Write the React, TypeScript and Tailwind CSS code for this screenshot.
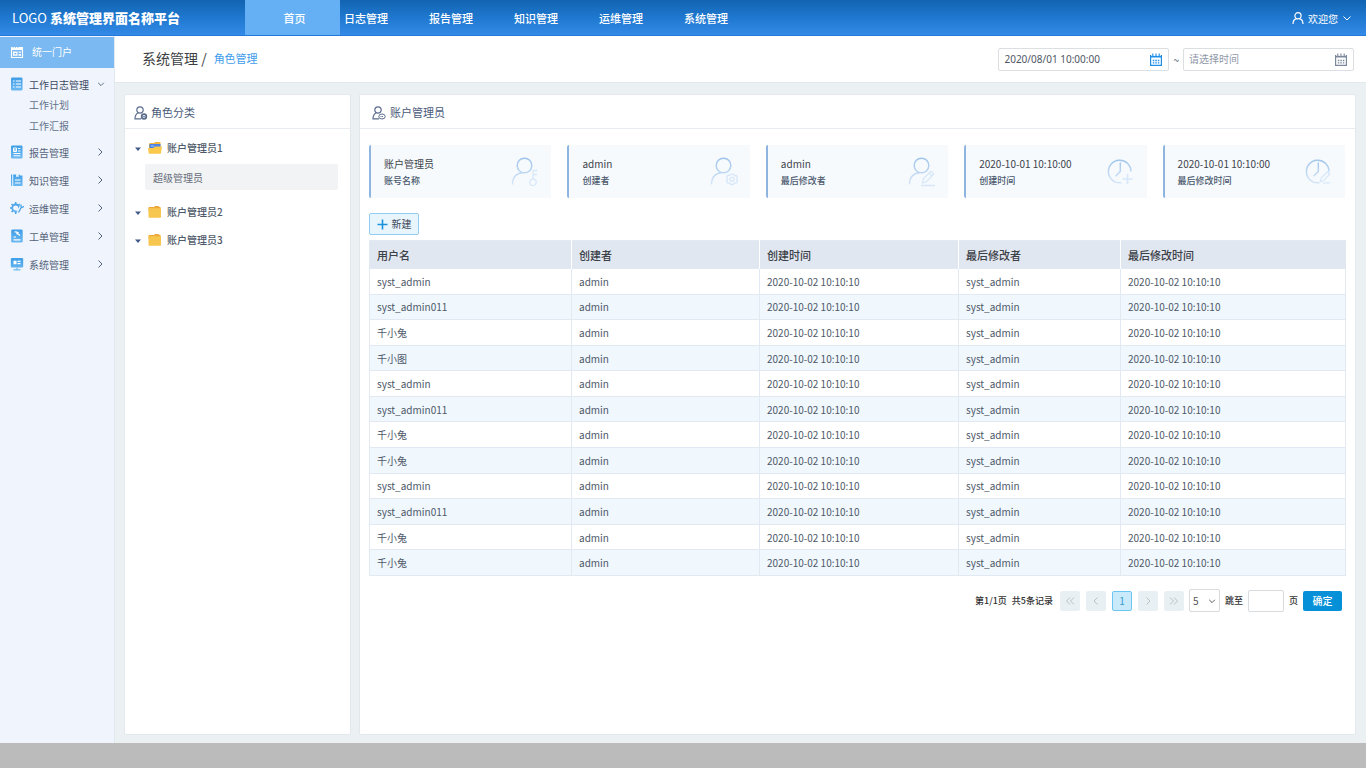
import React from "react";

const accounts = ["syst_admin", "syst_admin011", "千小兔", "千小图", "syst_admin", "syst_admin011", "千小兔", "千小兔", "syst_admin", "syst_admin011", "千小兔", "千小兔"];

function Chevron({ dir, className }: { dir: "left" | "right" | "down"; className?: string }) {
  const d = { left: "M6.5 1.5 3 5l3.5 3.5", right: "M3.5 1.5 7 5 3.5 8.5", down: "M1.5 3.5 5 7l3.5-3.5" }[dir];
  return (
    <svg viewBox="0 0 10 10" className={className ?? "size-2.5"} fill="none" stroke="currentColor" aria-hidden="true">
      <path d={d} />
    </svg>
  );
}

function DoubleChevron({ dir }: { dir: "left" | "right" }) {
  return (
    <svg viewBox="0 0 10 10" className="size-2.5" fill="none" stroke="currentColor" aria-hidden="true">
      <path d={dir === "left" ? "M5 1.5 1.5 5 5 8.5M9 1.5 5.5 5 9 8.5" : "M1 1.5 4.500 5 1 8.500M5 1.500 8.500 5 5 8.500"} />
    </svg>
  );
}

function PortalIcon() {
  return (
    <svg viewBox="0 0 14 14" className="size-3.5" fill="none" aria-hidden="true">
      <path d="M1 5V2h12v3z" fill="#fff" />
      <path d="M3 1v2M5.500 1v2M8 1v2" stroke="#7ab9f1" strokeWidth=".7" />
      <path d="M1.500 5v7.500h11V5" stroke="#fff" strokeWidth="1.200" />
      <path d="M3 6.500h4.500v4.200H3zM8.500 6.500H11v1.200H8.500zM8.500 9H11v1.700H8.500z" fill="#fff" />
      <path d="M4.300 8h2v1.400h-2z" fill="#7ab9f1" />
    </svg>
  );
}

type MenuIconName = "log" | "report" | "knowledge" | "ops" | "ticket" | "system";

function MenuIcon({ name }: { name: MenuIconName }) {
  const id = "menu-" + name;
  const blue = "url(#" + id + ")";
  const body: Record<MenuIconName, React.ReactNode> = {
    log: (
      <>
        <rect x="1" y=".5" width="11.500" height="13" rx="1.200" fill={blue} />
        <path d="M3 4h1.500M5.800 4H11M3 7h1.500M5.800 7H11M3 10h1.500M5.800 10H11" stroke="#fff" strokeWidth="1.200" />
      </>
    ),
    report: (
      <>
        <rect x="1" y=".5" width="11.500" height="13" rx="1.200" fill={blue} />
        <path d="M3.500 3h3v3.500h-3zM8 3.500h2.500M8 6h2.500M3.500 8.500h7M3.500 10.800h7" stroke="#fff" />
        <path d="M4 5h2" stroke="#fff" />
      </>
    ),
    knowledge: (
      <>
        <path d="M1 1.500h1.200V13H1z" fill={blue} />
        <path d="M3.200 1.500h3v2.800l1.200-.8 1.200.8V1.500h.9l.5 1h2.500V13H3.200z" fill={blue} />
        <path d="M5 7h5.500M5 10h5.500" stroke="#fff" strokeWidth="1.100" />
      </>
    ),
    ops: (
      <>
        <circle cx="5.700" cy="7" r="3.500" stroke={blue} strokeWidth="1.800" />
        <path d="M5.700 1v2M5.700 11v2M0 7h2M1.600 3l1.500 1.500M1.600 11l1.500-1.500M9.800 3 8.400 4.400M9.700 11 8.300 9.600" stroke="#4ba6ea" strokeWidth="1.600" />
        <path d="m8 11 4.500-6.500" stroke="#eff5fd" strokeWidth="3.500" />
        <path d="m8.500 11.500 3-5.500M11 3.500v2.200l1.300.8 1.500-1.200" stroke="#4ba6ea" strokeWidth="1.300" />
      </>
    ),
    ticket: (
      <>
        <rect x="1.200" y=".5" width="11.500" height="13" rx="1.200" fill={blue} />
        <path d="M4.500 3c2-.5 3 .3 3 1.500L10 6.500M6.500 5 8.500 3M3.500 8h2.500M3.500 10.800h7" stroke="#fff" strokeWidth="1.200" />
      </>
    ),
    system: (
      <>
        <rect x=".8" y="1" width="12.400" height="9.500" rx="1" fill={blue} />
        <path d="M3.500 3.800h3v3.500h-3zM7.500 3.800h3v1.300h-3zM7.500 6h3v1.300h-3z" fill="#fff" />
        <path d="M7 10.500v2.200M3.500 12.800h7" stroke="#6eb9f0" strokeWidth="1.200" />
      </>
    ),
  };
  return (
    <svg viewBox="0 0 14 14" className="size-3.5 shrink-0" fill="none" aria-hidden="true">
      <defs>
        <linearGradient id={id} x1="0" y1="0" x2="0" y2="14" gradientUnits="userSpaceOnUse">
          <stop stopColor="#3d9de6" />
          <stop offset="1" stopColor="#6ebaf2" />
        </linearGradient>
      </defs>
      {body[name]}
    </svg>
  );
}

function PanelUserIcon({ kind }: { kind: "gear" | "dots" }) {
  return (
    <svg viewBox="0 0 14 14" className="size-3.5" fill="none" stroke="#5b6d8c" aria-hidden="true">
      <circle cx="6" cy="4" r="3.200" strokeWidth="1.200" />
      <path d="M4 7C2 8 1 10 1 12.800h6" strokeWidth="1.200" />
      {kind === "gear" ? (
        <>
          <circle cx="10" cy="10.500" r="2.300" strokeWidth="1.800" />
          <circle cx="10" cy="10.500" r=".5" />
        </>
      ) : (
        <>
          <ellipse cx="10" cy="10.500" rx="3.200" ry="2.500" />
          <path d="M8.500 10.500h3" strokeDasharray="1 .5" />
        </>
      )}
    </svg>
  );
}

function CalendarIcon() {
  return (
    <svg viewBox="0 0 12 13" className="h-[13px] w-3" fill="none" stroke="currentColor" aria-hidden="true">
      <path d="M.6 2v10.400h10.800V2" strokeWidth="1.200" />
      <path d="M0 3.700h12" strokeWidth="1.600" />
      <path d="M2.800.5v3M6 .5v3M9.200.5v3" strokeWidth="1.100" />
      <path d="M2.800 7.500h6.500M2.800 9.800h6.500" strokeWidth="1.300" strokeDasharray="1.500 1" />
    </svg>
  );
}

function Folder({ open }: { open?: boolean }) {
  return (
    <svg viewBox="0 0 14 12" className="mt-0.5 h-3 w-3.5" aria-hidden="true">
      {open ? (
        <>
          <path d="M1 2.500Q1 1 2 1h4l1-1h5.500v9H1z" fill="#f3b63c" />
          <path d="M1.500 2h11v6h-11z" fill="#4c84e6" />
          <path d="M3 4h3" stroke="#a6c5fa" />
          <path d="M0 6h5.500l1.200-1.500H14L13 11q0 .8-.8.8H1.500Q.8 11.800.7 11z" fill="#fac94c" />
        </>
      ) : (
        <>
          <path d="M.5 1.700Q.5 1 1.200 1H6l1-1h3.500l1 1h1v4H.5z" fill="#eda83b" />
          <path d="M.5 2.300h12.500V11q0 .7-.7.7H1.200q-.7 0-.7-.7z" fill="#f7c64e" />
        </>
      )}
    </svg>
  );
}

type BadgeName = "key" | "gear" | "pen" | "clockPlus" | "clockPen";

function CardIcon({ name }: { name: BadgeName }) {
  const clock = name === "clockPlus" || name === "clockPen";
  const id = "fade-" + name;
  return (
    <svg viewBox="0 0 28 30" className="h-[30px] w-7 shrink-0" fill="none" aria-hidden="true">
      <defs>
        <linearGradient id={id} x1="0" y1="0" x2="0" y2="30" gradientUnits="userSpaceOnUse">
          <stop stopColor="#9cc2ea" />
          <stop offset="1" stopColor="#dceafa" />
        </linearGradient>
      </defs>
      <g stroke={"url(#" + id + ")"} strokeWidth="1.500">
        {clock ? (
          <>
            <path d="M24 14.500a11.300 11.300 0 1 0-9.500 11.200" />
            <path d="M13.300 6v8.500L9 18.800" strokeLinecap="round" />
          </>
        ) : (
          <>
            <circle cx="13.500" cy="8.500" r="7.300" />
            <path d="M1.500 27.500C1.500 20 6 15.800 11.500 15.700" />
          </>
        )}
      </g>
      <g stroke="#d8e8f9" strokeWidth="1.300">
        {name === "key" && <path d="M22 22v-9M22 13.500h4.500M22 17.500h4M22 22a3.300 3.300 0 1 0 .01 0" />}
        {name === "gear" && (
          <>
            <path d="m18 17.800 1.500.7 1.500-1.300h2.500l1 1.500 2-.2 1 2-1 1.800 1 2-1.200 1.800-2-.2-1 1.600h-2.500L19.700 26l-2 .1-1.200-2 1.200-1.800-1.200-2z" />
            <circle cx="22" cy="22.300" r="2" />
          </>
        )}
        {name === "pen" && <path d="m14.500 26 1-4.500 7.500-7.300 2.800 2.800-7 7.400zM21 16l3 3M13 28.500h14" />}
        {name === "clockPlus" && <path d="M20.500 17v10M15.500 22h10" strokeWidth="1.700" />}
        {name === "clockPen" && <path d="m15.500 24.500.7-3.500 6.300-6.300 2.300 2.300-6 6.500zM18 25.800h7" />}
      </g>
    </svg>
  );
}

const cards: { title: string; label: string; icon: BadgeName }[] = [
  { title: "账户管理员", label: "账号名称", icon: "key" },
  { title: "admin", label: "创建者", icon: "gear" },
  { title: "admin", label: "最后修改者", icon: "pen" },
  { title: "2020-10-01 10:10:00", label: "创建时间", icon: "clockPlus" },
  { title: "2020-10-01 10:10:00", label: "最后修改时间", icon: "clockPen" },
];

const menu: { name: string; icon: MenuIconName }[] = [
  { name: "报告管理", icon: "report" },
  { name: "知识管理", icon: "knowledge" },
  { name: "运维管理", icon: "ops" },
  { name: "工单管理", icon: "ticket" },
  { name: "系统管理", icon: "system" },
];

function DateField({ label, value, active }: { label: string; value?: string; active?: boolean }) {
  return (
    <div className="flex h-[23px] w-[171px] items-center rounded-xs border border-[#dcdfe2] bg-white pr-1.5 pl-[5px]">
      <input aria-label={label} defaultValue={value} placeholder="请选择时间" className="min-w-0 flex-1 font-['Noto_Sans','Noto_Sans_CJK_SC',sans-serif] text-[10px] text-[#4f5663] outline-none placeholder:text-[#8f98a8]" />
      <button type="button" aria-label={label} className={active ? "text-[#1e8ee8]" : "text-[#7c899c]"}>
        <CalendarIcon />
      </button>
    </div>
  );
}

function TreeRow({ name, open }: { name: string; open?: boolean }) {
  return (
    <button type="button" className="flex h-7 w-full items-center pl-2.5 text-[10px] font-medium text-[#4e5969]">
      <svg viewBox="0 0 6 4" className="mt-1 mr-[7px] h-1 w-1.5" aria-hidden="true"><path d="M0 .5h6L3 4z" fill="#41598b" /></svg>
      <Folder open={open} />
      <span className="ml-[5px]">{name}</span>
    </button>
  );
}

function PageButton({ label, children }: { label: string; children: React.ReactNode }) {
  return <button type="button" aria-label={label} className="flex size-5 items-center justify-center rounded-xs bg-[#e9f0f3] text-[#b5c1c8]">{children}</button>;
}

export default function App() {
  return (
    <div className="flex min-h-screen flex-col bg-[#ebf0f3] font-['Noto_Sans_CJK_SC',sans-serif] text-[10px] text-[#4e5969]">
      <header className="flex h-9 items-start border-b border-[#2279da] bg-linear-to-b from-[#1264b1] via-[#1f78cf] to-[#338ae7] text-white">
        <div className="flex h-9 w-[245px] items-center gap-[3px] pl-3 text-[13px]">
          <span>LOGO</span>
          <span className="font-black">系统管理界面名称平台</span>
        </div>
        <nav className="flex h-[35px] flex-1 text-[11px] font-medium">
          <a href="#home" className="flex w-[95px] items-center justify-center bg-[#65b0f5] pt-0.5 pl-1">首页</a>
          {["日志管理", "报告管理", "知识管理", "运维管理", "系统管理"].map((n) => (
            <a key={n} href={"#" + n} className="flex w-[85px] items-center pt-0.5 pl-1">{n}</a>
          ))}
        </nav>
        <button type="button" className="mr-3.5 flex h-9 items-center gap-1">
          <svg viewBox="0 0 12 12" className="size-3" fill="none" stroke="currentColor" strokeWidth="1.200" aria-hidden="true">
            <circle cx="6" cy="3.800" r="3.100" />
            <path d="M1 12c0-3 1.500-5 3.800-5.400M11 12c0-3-1.500-5-3.800-5.400" />
          </svg>
          <span>欢迎您</span>
          <Chevron dir="down" className="size-2.5" />
        </button>
      </header>

      <div className="flex flex-1">
        <aside className="w-[115px] shrink-0 border-r border-[#e0e8f0] bg-[#f0f5fd] pt-px">
          <a href="#portal" className="flex h-[31px] items-center gap-2 bg-[#7ab9f1] pb-0.5 pl-2.5 text-white"><PortalIcon />统一门户</a>
          <button type="button" className="mt-1.5 flex h-5 w-full items-center pr-[9px] pl-2.5 text-[#3c4a63]">
            <MenuIcon name="log" />
            <span className="ml-[5px] flex-1 text-left">工作日志管理</span>
            <Chevron dir="down" className="size-2" />
          </button>
          <a href="#plan" className="flex h-[21px] items-center pl-[29px] text-[#63728a]">工作计划</a>
          <a href="#summary" className="flex h-[21px] items-center pl-[29px] text-[#63728a]">工作汇报</a>
          <div className="mt-0.5">
            {menu.map((m) => (
              <button type="button" key={m.name} className="flex h-7 w-full items-center pr-[9px] pl-2.5 text-[#55637a]">
                <MenuIcon name={m.icon} />
                <span className="ml-[5px] flex-1 text-left">{m.name}</span>
                <Chevron dir="right" />
              </button>
            ))}
          </div>
        </aside>

        <div className="flex min-w-0 flex-1 flex-col">
          <div className="flex h-[47px] items-center justify-between border-b border-[#e2e8ec] bg-white pr-3 pl-[27px]">
            <div className="flex items-center pb-0.5">
              <h1 className="text-[14px] text-[#3d3f44]">系统管理 /</h1>
              <a href="#roles" className="ml-[7px] text-[11px] text-[#419cec]">角色管理</a>
            </div>
            <div className="flex items-center gap-1">
              <DateField label="开始时间" value="2020/08/01 10:00:00" active />
              <span>~</span>
              <DateField label="结束时间" />
            </div>
          </div>

          <div className="flex flex-1 gap-2 pt-[11px] pr-2.5 pb-2 pl-[9px]">
            <section className="w-[227px] shrink-0 rounded-xs border border-[#e2e8ec] bg-white">
              <h2 className="flex h-[34px] items-center gap-[3px] border-b border-[#e8ecf0] pt-0.5 pl-[9px] text-[11px] text-[#4a5b7a]"><PanelUserIcon kind="gear" />角色分类</h2>
              <div className="pt-1">
                <TreeRow name="账户管理员1" open />
                <button type="button" className="mx-5 mt-[3px] mb-[7px] flex h-[26px] w-[193px] items-center rounded-xs bg-[#f2f3f5] pl-2 text-[#666d7a]">超级管理员</button>
                <TreeRow name="账户管理员2" />
                <TreeRow name="账户管理员3" />
              </div>
            </section>

            <main className="min-w-0 flex-1 rounded-xs border border-[#e2e8ec] bg-white">
              <h2 className="flex h-[34px] items-center gap-1 border-b border-[#e8ecf0] pt-0.5 pl-3 text-[11px] text-[#4a5b7a]"><PanelUserIcon kind="dots" />账户管理员</h2>
              <div className="pt-4 pr-2.5 pl-[9px]">
                <div className="grid grid-cols-5 gap-4">
                  {cards.map((c) => (
                    <div key={c.label} className="flex h-[53px] items-center justify-between rounded-l-xs border-l-2 border-[#8db5e0] bg-[#f6fafd] pr-3 pl-[13px]">
                      <div>
                        <div className="leading-[17px] text-[#3f444c]">{c.title}</div>
                        <div className="text-[9px] leading-[17px] font-medium text-[#4a586c]">{c.label}</div>
                      </div>
                      <CardIcon name={c.icon} />
                    </div>
                  ))}
                </div>

                <button type="button" className="mt-[15px] flex h-[22px] w-[50px] items-center justify-center gap-1 rounded-xs border border-[#91cef4] bg-[#e8f5fd] pb-0.5 text-[#3c4656]">
                  <svg viewBox="0 0 11 11" className="mt-0.5 size-[11px]" stroke="#1a93dc" strokeWidth="1.600" aria-hidden="true"><path d="M5.500.5v10M.5 5.500h10" /></svg>
                  新建
                </button>

                <table className="mt-[5px] h-[336px] w-full table-fixed border-collapse border border-[#e2e9f2] text-left">
                  <colgroup>
                    <col className="w-[202px]" />
                    <col className="w-[188px]" />
                    <col className="w-[199px]" />
                    <col className="w-[162px]" />
                    <col className="w-[225px]" />
                  </colgroup>
                  <thead>
                    <tr className="h-7 bg-[#e1e7f0] text-[11px] text-[#3c4047]">
                      {["用户名", "创建者", "创建时间", "最后修改者", "最后修改时间"].map((h) => (
                        <th key={h} scope="col" className="border-r border-white px-[7px] py-0 pt-0.5 font-medium last:border-[#e1e7f0]">{h}</th>
                      ))}
                    </tr>
                  </thead>
                  <tbody>
                    {accounts.map((a, i) => (
                      <tr key={i} className="h-[25px] odd:bg-white even:bg-[#f0f7fd]">
                        {[a, "admin", "2020-10-02 10:10:10", "syst_admin", "2020-10-02 10:10:10"].map((v, j) => (
                          <td key={j} className="border border-[#e2e9f2] px-[7px] py-0">{v}</td>
                        ))}
                      </tr>
                    ))}
                  </tbody>
                </table>

                <div className="mt-[13px] mr-[3px] flex items-center justify-end gap-[5px] text-[9px] font-medium text-[#333]">
                  <span>第1/1页</span>
                  <span className="mr-0.5">共5条记录</span>
                  <div className="flex gap-1.5">
                    <PageButton label="首页"><DoubleChevron dir="left" /></PageButton>
                    <PageButton label="上一页"><Chevron dir="left" /></PageButton>
                    <button type="button" aria-current="page" className="size-5 rounded-xs border border-[#6cc5f2] bg-[#c9eafb] text-[10px] leading-none font-normal text-[#3a9bd2]">1</button>
                    <PageButton label="下一页"><Chevron dir="right" /></PageButton>
                    <PageButton label="末页"><DoubleChevron dir="right" /></PageButton>
                  </div>
                  <div className="grid h-[23px] w-[31px] items-center">
                    <select aria-label="每页条数" className="col-start-1 row-start-1 h-full w-full appearance-none rounded-xs border border-[#d8dcdf] bg-white pl-[3px] text-[10px] font-normal text-[#555]">
                      <option>5</option>
                    </select>
                    <span className="pointer-events-none col-start-1 row-start-1 mr-1 justify-self-end"><Chevron dir="down" className="size-2" /></span>
                  </div>
                  <label htmlFor="jump">跳至</label>
                  <input id="jump" className="h-[22px] w-9 rounded-xs border border-[#d8dcdf] bg-white px-1" />
                  <span>页</span>
                  <button type="button" className="h-5 w-[39px] rounded-xs bg-[#0690d8] text-[10px] text-white">确定</button>
                </div>
              </div>
            </main>
          </div>
        </div>
      </div>
      <footer className="h-[25px] bg-[#bbb]" />
    </div>
  );
}
